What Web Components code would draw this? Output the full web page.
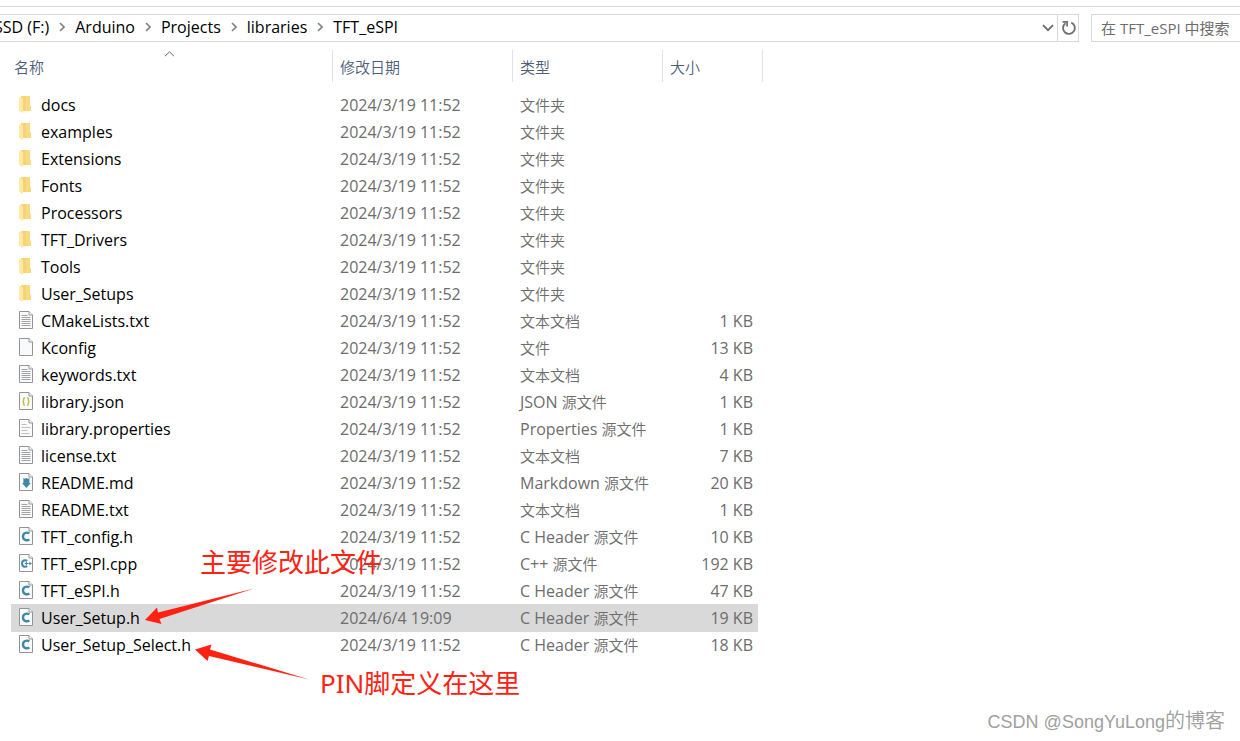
<!DOCTYPE html>
<html lang="zh-CN">
<head>
<meta charset="utf-8">
<title>TFT_eSPI</title>
<style>
  html, body { margin: 0; background: #fff; }
  body { font: 370 16px/27px "Open Sans", "Noto Sans CJK SC", sans-serif; color: #000; }
</style>
</head>
<body>
<explorer-window>
  <address-bar slot="bar"></address-bar>
  <file-list></file-list>
  <note-label slot="notes" style="left:200px;top:543px">主要修改此文件</note-label>
  <note-label slot="notes" style="left:320px;top:664px">PIN脚定义在这里</note-label>
  <note-arrow slot="notes" kind="down" style="left:140px;top:584px"></note-arrow>
  <note-arrow slot="notes" kind="up" style="left:190px;top:640px"></note-arrow>
  <water-mark slot="notes">CSDN @SongYuLong的博客</water-mark>
</explorer-window>

<script>
// Han runs are set one pixel smaller than the Latin text beside them.
const mixed = t => t.replace(/[\u4e00-\u9fff]+/g, '<span class="zh">$&</span>');
const ZH = '.zh{font-family:"Noto Sans CJK SC",sans-serif;font-weight:350;font-size:15px;line-height:1}';

class ExplorerWindow extends HTMLElement {
  constructor() {
    super();
    this.attachShadow({ mode: 'open' }).innerHTML = `
      <style>
        :host { display: block; position: relative; min-height: 100vh; overflow: hidden; }
        .top { height: 6px; border-bottom: 1px solid #dadada; }
      </style>
      <div class="top"></div>
      <slot name="bar"></slot>
      <main><slot></slot></main>
      <slot name="notes"></slot>`;
  }
}

class AddressBar extends HTMLElement {
  constructor() {
    super();
    const sep = '<svg width="6" height="10" viewBox="0 0 6 10"><path d="M1 1l4 4-4 4" fill="none" stroke="#808080" stroke-width="1.6"/></svg>';
    const crumbs = ['SSD (F:)', 'Arduino', 'Projects', 'libraries', 'TFT_eSPI'];
    this.attachShadow({ mode: 'open' }).innerHTML = `
      <style>
        :host { display: flex; gap: 12px; padding-top: 7px; height: 28px; }
        .path { flex: 1; display: flex; border: 1px solid #d9d9d9; border-left: 0; box-sizing: border-box; min-width: 0; }
        nav { flex: 1; display: flex; align-items: center; gap: 10px; justify-content: flex-start; margin-left: -6px; line-height: 24px; padding-bottom: 2px; white-space: nowrap; }
        nav svg { flex: none; }
        a { color: #000; text-decoration: none; }
        button { border: 0; padding: 0 0 0 1px; background: none; width: 20px; display: grid; place-items: center; }
        button.reload { border-left: 1px solid #d9d9d9; width: 21px; padding-left: 2px; }
        label { display: flex; width: 149px; box-sizing: border-box; border: 1px solid #d9d9d9; border-right: 0; padding-left: 9px; }
        input { width: 100%; border: 0; padding: 0; background: none; outline: 0; font: 370 15px/26px "Open Sans","Noto Sans CJK SC",sans-serif; color: #6d6d6d; }
        input::placeholder { color: #6d6d6d; opacity: 1; }
      </style>
      <div class="path">
        <nav aria-label="地址">${crumbs.map(c => `<a href="#">${c}</a>`).join(sep)}</nav>
        <button aria-label="以前的位置"><svg width="12" height="8" viewBox="0 0 12 8"><path d="M1 1.2l5 5 5-5" fill="none" stroke="#6e6e6e" stroke-width="1.9"/></svg></button>
        <button class="reload" aria-label="刷新"><svg width="16" height="16" viewBox="0 0 16 16"><path d="M10.3 2.6A5.9 5.9 0 1 1 4.5 3.2" fill="none" stroke="#707070" stroke-width="1.9"/><path d="M1.6 1.9h4.5v4.6" fill="none" stroke="#707070" stroke-width="1.7"/></svg></button>
      </div>
      <label><input type="text" aria-label="搜索" placeholder="在 TFT_eSPI 中搜索"></label>`;
  }
}

const sheet = '<path d="M.5 .5h9.5l3.5 3.5v13.5H.5z" fill="#f8fafb" stroke="#949494"/><path d="M10 .5V4h3.5" fill="#fff" stroke="#949494"/>';
const BIG_C = '<path d="M10.4 6.3C7.5 4.7 4 6 4 9.4S7.5 14.1 10.4 12.5" fill="none" stroke="#3f88a8" stroke-width="2.4"/>';
const ART = {
  folder: '<path d="M2 1h9v9.6l1 .8v4.6H4z" fill="#f6d373"/><path d="M7 1h4v9.6l1 .8v4.6H7z" fill="#f9da80"/><path d="M0 1.4l4 2v14.6L0 16z" fill="#ffe9a6"/>',
  text: sheet + '<path d="M2.5 4.5h6M2.5 6.5h9M2.5 8.5h9M2.5 10.5h9M2.5 12.5h9M2.5 14.5h9" stroke="#a3a3a3"/>',
  blank: sheet,
  props: sheet + '<path d="M2.5 5.5h5M2.5 8.5h9M2.5 11.5h6M2.5 14.5h8" stroke="#c0c0c0"/>',
  json: sheet + '<path d="M6 5.8c-1.8 0-1.3 1.1-1.3 2.1 0 .9-.3 1.5-1.2 1.6.9.1 1.2.7 1.2 1.6 0 1-.5 2.1 1.3 2.1M8 5.8c1.8 0 1.3 1.1 1.3 2.1 0 .9.3 1.5 1.2 1.6-.9.1-1.2.7-1.2 1.6 0 1 .5 2.1-1.3 2.1" fill="none" stroke="#bfc04a" stroke-width="1.4"/>',
  md: sheet + '<path d="M4.4 5l1.4.8L7.4 5l1.6.8 1.4-.8v5h1.4l-4.4 5-4.4-5h1.4z" fill="#3f88a8"/>',
  c: sheet + BIG_C,
  cpp: sheet + '<path d="M8.2 6.8C5.8 5.4 3 6.6 3 9.5s2.8 4.1 5.2 2.7" fill="none" stroke="#3f88a8" stroke-width="2.1"/><path d="M5.8 9.5H9M7.4 8v3M9.4 9.5h3.2M11 8v3" stroke="#3f88a8" stroke-width="1"/>'
};

class FileIcon extends HTMLElement {
  connectedCallback() {
    if (this.shadowRoot) return;
    this.attachShadow({ mode: 'open' }).innerHTML = `
      <style>:host { display: block; flex: none; } svg { display: block; }</style>
      <svg width="14" height="18" viewBox="0 0 14 18" aria-hidden="true">${ART[this.getAttribute('kind')]}</svg>`;
  }
}

const D = '2024/3/19 11:52', F = '文件夹', TX = '文本文档', H = 'C Header 源文件';
const FILES = [
  ...['docs', 'examples', 'Extensions', 'Fonts', 'Processors', 'TFT_Drivers', 'Tools', 'User_Setups'].map(n => ['folder', n, D, F, '']),
  ['text', 'CMakeLists.txt', D, TX, '1 KB'],
  ['blank', 'Kconfig', D, '文件', '13 KB'],
  ['text', 'keywords.txt', D, TX, '4 KB'],
  ['json', 'library.json', D, 'JSON 源文件', '1 KB'],
  ['props', 'library.properties', D, 'Properties 源文件', '1 KB'],
  ['text', 'license.txt', D, TX, '7 KB'],
  ['md', 'README.md', D, 'Markdown 源文件', '20 KB'],
  ['text', 'README.txt', D, TX, '1 KB'],
  ['c', 'TFT_config.h', D, H, '10 KB'],
  ['cpp', 'TFT_eSPI.cpp', D, 'C++ 源文件', '192 KB'],
  ['c', 'TFT_eSPI.h', D, H, '47 KB'],
  ['c', 'User_Setup.h', '2024/6/4 19:09', H, '19 KB', true],
  ['c', 'User_Setup_Select.h', D, H, '18 KB']
];

class FileList extends HTMLElement {
  constructor() {
    super();
    this.attachShadow({ mode: 'open' }).innerHTML = `
      <style>
        ${ZH}
        :host { display: block; padding: 8px 0 0 11px; }
        table { table-layout: fixed; width: 747px; border-collapse: separate; border-spacing: 0; }
        .n { width: 322px; } .d { width: 180px; } .t { width: 150px; }
        th, td { padding: 2px 0 0 7px; font-weight: inherit; text-align: left; white-space: nowrap; }
        th { height: 30px; line-height: 30px; color: #4c607a; position: relative; }
        th:first-child { padding-left: 3px; }
        th::after { content: ""; position: absolute; right: 0; top: 0; width: 1px; height: 100%; background: #e2e2e2; }
        th:last-child::after { right: -5px; }
        th svg { position: absolute; left: 153px; top: 1px; }
        thead::after { content: ""; display: block; height: 9px; }
        td { height: 25px; line-height: 25px; color: #6d6d6d; }
        td:first-child { color: #000; padding: 0 0 0 8px; }
        td:last-child { text-align: right; padding-right: 5px; }
        .file { display: flex; gap: 8px; height: 27px; box-sizing: border-box; padding-top: 2px; }
        file-icon { padding-top: 2px; }
        tr.sel td { background: #d9d9d9; box-shadow: 0 1px #d9d9d9; }
      </style>
      <table>
        <colgroup><col class="n"><col class="d"><col class="t"><col></colgroup>
        <thead><tr>
          <th aria-sort="ascending">${mixed('名称')}<svg width="11" height="6" viewBox="0 0 11 6"><path d="M1 5.2L5.5 .8 10 5.2" fill="none" stroke="#6a6a6a"/></svg></th>
          <th>${mixed('修改日期')}</th><th>${mixed('类型')}</th><th>${mixed('大小')}</th>
        </tr></thead>
        <tbody>${FILES.map(([k, n, d, t, s, sel]) => `<tr${sel ? ' class="sel"' : ''}>
          <td><div class="file"><file-icon kind="${k}"></file-icon><span>${n}</span></div></td>
          <td>${d}</td><td>${mixed(t)}</td><td>${s}</td></tr>`).join('')}</tbody>
      </table>`;
  }
}

class NoteLabel extends HTMLElement {
  constructor() {
    super();
    this.attachShadow({ mode: 'open' }).innerHTML = `
      <style>:host { position: absolute; font: 400 26px/38px "Noto Sans","Noto Sans CJK SC",sans-serif; color: #ff2213; white-space: nowrap; }</style>
      <slot></slot>`;
  }
}

class NoteArrow extends HTMLElement {
  connectedCallback() {
    if (this.shadowRoot) return;
    const d = this.getAttribute('kind') === 'down'
      ? 'M5 36L17 23.5L18 28.5L114 4.5L19.5 35L21.5 40Z'
      : 'M5 9.5L21.5 4.5L20 9.5L119 39.5L19 16L17.5 21Z';
    this.attachShadow({ mode: 'open' }).innerHTML = `
      <style>:host { position: absolute; } svg { display: block; }</style>
      <svg width="120" height="44" viewBox="0 0 120 44" aria-hidden="true"><path d="${d}" fill="#ff2213"/></svg>`;
  }
}

class WaterMark extends HTMLElement {
  constructor() {
    super();
    this.attachShadow({ mode: 'open' }).innerHTML = `
      <style>
        :host { position: absolute; right: 15px; bottom: 5px; font: 18px/28px "Liberation Sans",sans-serif; color: #a0a0a0; white-space: nowrap; }
        span { font: 350 20px/28px "Noto Sans CJK SC",sans-serif; }
      </style>`;
  }
  connectedCallback() {
    this.shadowRoot.innerHTML += this.textContent.replace(/[\u4e00-\u9fff]+/, '<span>$&</span>');
  }
}

customElements.define('file-icon', FileIcon);
customElements.define('address-bar', AddressBar);
customElements.define('file-list', FileList);
customElements.define('note-label', NoteLabel);
customElements.define('note-arrow', NoteArrow);
customElements.define('water-mark', WaterMark);
customElements.define('explorer-window', ExplorerWindow);
</script>
</body>
</html>
